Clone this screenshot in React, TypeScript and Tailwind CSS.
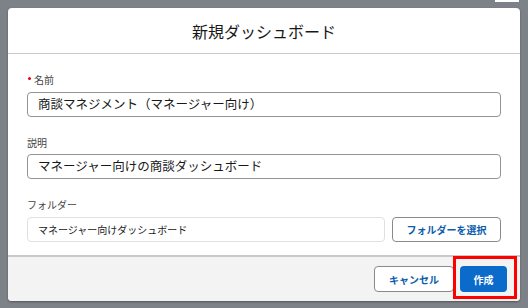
import React from "react";

export default function App() {
  return (
    <div className="relative w-[528px] h-[308px] overflow-hidden bg-[#7d8188] px-[8px] pt-[8px] font-['Noto_Sans_CJK_JP','Noto_Sans',sans-serif]">
      <div className="absolute left-[495px] top-0 w-[24px] h-[2px] bg-white" />
      <div className="flex flex-col w-[512px] h-[293px] bg-white rounded-[4px] overflow-hidden shadow-[0_1px_2px_rgba(0,0,0,0.35)]">
        <div className="h-[46px] shrink-0 flex items-center justify-center border-b border-[#c9c9c9]">
          <span className="text-[16px] leading-none text-[#181818]">新規ダッシュボード</span>
        </div>
        <div className="flex-1 flex flex-col px-[19px] pt-[19px]">
          <div className="flex items-center h-[14px] text-[10px] leading-none text-[#444]">
            <span className="w-[3px] h-[3px] rounded-full bg-[#ea001e] mr-[3px] ml-[1px] -mt-[3px]" />
            <span>名前</span>
          </div>
          <div className="mt-[5px] h-[25px] flex items-center rounded-[4px] border border-[#939393] px-[10px] text-[12.5px] text-[#181818]">
            商談マネジメント（マネージャー向け）
          </div>
          <div className="mt-[19px] flex items-center h-[14px] text-[10px] leading-none text-[#444]">説明</div>
          <div className="mt-[4px] h-[25px] flex items-center rounded-[4px] border border-[#939393] px-[10px] text-[12.5px] text-[#181818]">
            マネージャー向けの商談ダッシュボード
          </div>
          <div className="mt-[19px] flex items-center h-[14px] text-[10px] leading-none text-[#444]">フォルダー</div>
          <div className="mt-[5px] flex gap-[7px]">
            <div className="flex-1 h-[25px] flex items-center rounded-[4px] border border-[#e0e0e0] px-[10px] text-[10px] text-[#181818]">
              マネージャー向けダッシュボード
            </div>
            <div className="w-[109px] h-[25px] flex items-center justify-center rounded-[4px] border border-[#8a8a8a] text-[10px] font-bold text-[#0b5cab]">
              フォルダーを選択
            </div>
          </div>
        </div>
        <div className="h-[46px] shrink-0 flex items-start justify-end gap-[6px] bg-[#f3f3f3] border-t-2 border-[#c9c9c9] pt-[9px] pr-[13px]">
          <div className="w-[80px] h-[26px] flex items-center justify-center rounded-[4px] border border-[#8a8a8a] bg-white text-[10px] font-bold text-[#0b5cab]">
            キャンセル
          </div>
          <div className="w-[47px] h-[26px] flex items-center justify-center rounded-[4px] bg-[#0b6bcb] text-[10px] font-bold text-white">
            作成
          </div>
        </div>
      </div>
      <div className="absolute left-[453px] top-[256px] w-[64px] h-[43px] border-[3px] border-[#ff0000]" />
    </div>
  );
}
